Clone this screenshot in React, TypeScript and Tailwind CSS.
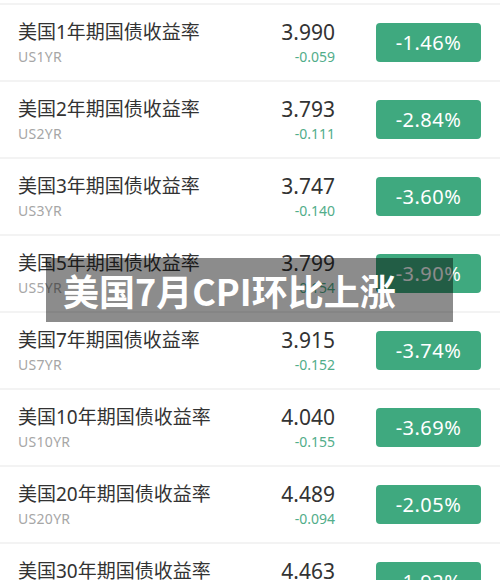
import React from "react";

// 美债收益率列表
const rows = [
  { name: "美国1年期国债收益率", code: "US1YR", price: "3.990", diff: "-0.059", pct: "-1.46%" },
  { name: "美国2年期国债收益率", code: "US2YR", price: "3.793", diff: "-0.111", pct: "-2.84%" },
  { name: "美国3年期国债收益率", code: "US3YR", price: "3.747", diff: "-0.140", pct: "-3.60%" },
  { name: "美国5年期国债收益率", code: "US5YR", price: "3.799", diff: "-0.154", pct: "-3.90%" },
  { name: "美国7年期国债收益率", code: "US7YR", price: "3.915", diff: "-0.152", pct: "-3.74%" },
  { name: "美国10年期国债收益率", code: "US10YR", price: "4.040", diff: "-0.155", pct: "-3.69%" },
  { name: "美国20年期国债收益率", code: "US20YR", price: "4.489", diff: "-0.094", pct: "-2.05%" },
  { name: "美国30年期国债收益率", code: "US30YR", price: "4.463", diff: "-0.088", pct: "-1.92%" },
];

export default function App() {
  return (
    <div
      className="relative w-[500px] h-[580px] overflow-hidden bg-white pt-[3px]"
      style={{ fontFamily: '"Noto Sans", "Noto Sans CJK SC", sans-serif' }}
    >
      {rows.map((row) => (
        <div
          key={row.code}
          className="flex items-center h-[77px] border-t-2 border-[#f3f3f3] pl-[18px] pr-[19px]"
        >
          <div className="flex-1">
            <div className="text-[19px] leading-[22px] text-[#333]">{row.name}</div>
            <div className="mt-[6px] text-[14px] leading-[16px] text-[#a6a6a6] tracking-[0.3px]">
              {row.code}
            </div>
          </div>
          <div className="flex flex-col items-end mr-[41px]">
            <div className="text-[21px] leading-[24px] text-[#333]">{row.price}</div>
            <div className="mt-[5px] text-[14px] leading-[16px] text-[#52ad8a]">{row.diff}</div>
          </div>
          <div className="w-[105px] h-[39px] rounded-[4px] bg-[#3fa97f] text-white text-[20px] flex items-center justify-center tracking-[0.5px]">
            {row.pct}
          </div>
        </div>
      ))}

      {/* 标题遮罩 */}
      <div className="absolute left-[46px] top-[258px] w-[407px] h-[64px] bg-black/45 flex items-center pl-[17px]">
        <span
          className="text-white text-[36px] font-bold leading-none"
          style={{ fontFamily: '"Noto Sans CJK SC", sans-serif' }}
        >
          美国7月CPI环比上涨
        </span>
      </div>
    </div>
  );
}
